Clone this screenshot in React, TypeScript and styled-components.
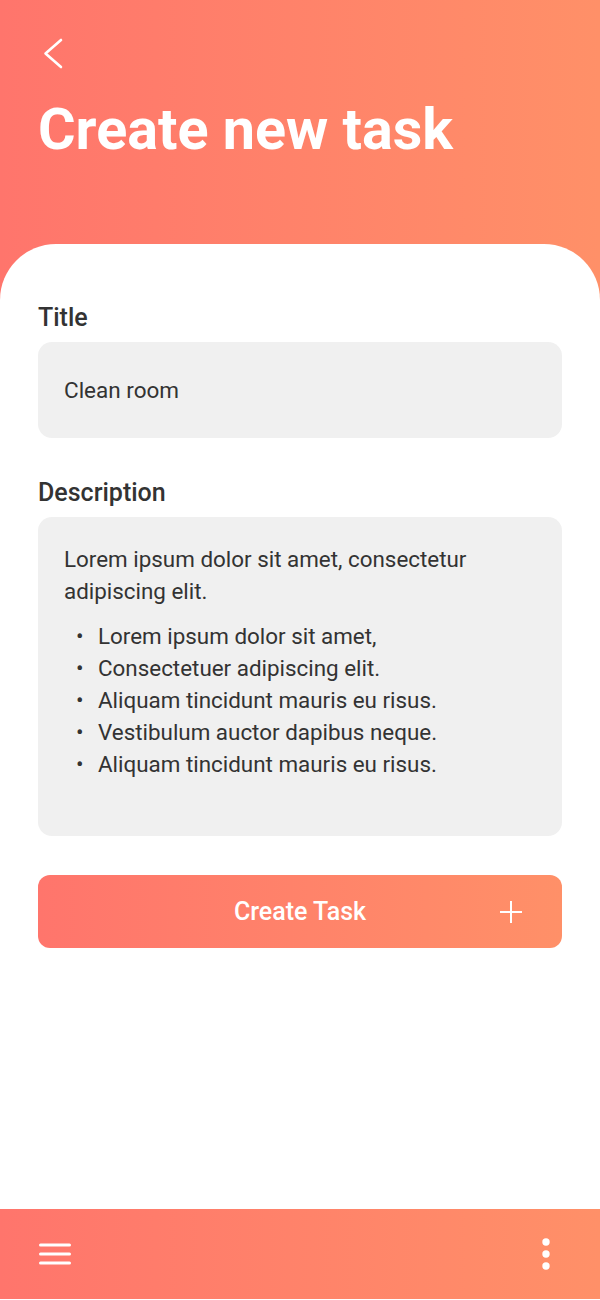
import React from "react";
import styled, { createGlobalStyle } from "styled-components";

const GlobalStyle = createGlobalStyle`
  html, body {
    margin: 0;
    padding: 0;
    background: #ffffff;
  }
  body {
    font-family: Roboto, "Noto Sans", "Liberation Sans", sans-serif;
    -webkit-font-smoothing: antialiased;
  }
  * { box-sizing: border-box; }
`;

const brandGradient = "linear-gradient(90deg, #ff756c 0%, #ff9068 100%)";

const Page = styled.div`
  width: 600px;
  height: 1299px;
  display: flex;
  flex-direction: column;
  background: ${brandGradient};
`;

const Header = styled.header`
  height: 244px;
  flex-shrink: 0;
  padding: 36px 38px 0 38px;
  display: flex;
  flex-direction: column;
  align-items: flex-start;
`;

const BackButton = styled.button`
  width: 30px;
  height: 34px;
  padding: 0;
  border: none;
  background: transparent;
  display: flex;
  cursor: pointer;
`;

const Title = styled.h1`
  margin: 31px 0 0 0;
  font-size: 57.5px;
  line-height: 58px;
  font-weight: 700;
  color: #ffffff;
  letter-spacing: 0;
`;

const Card = styled.main`
  flex: 1;
  background: #ffffff;
  border-radius: 56px 56px 0 0;
  padding: 60px 38px 0 38px;
  display: flex;
  flex-direction: column;
`;

const Label = styled.label<{ $gap?: number }>`
  display: block;
  margin-top: ${(p) => p.$gap ?? 0}px;
  font-size: 25px;
  line-height: 28px;
  font-weight: 500;
  color: #333333;
`;

const Field = styled.div`
  margin-top: 10px;
  height: 96px;
  border-radius: 14px;
  background: #f0f0f0;
  padding: 0 26px;
  display: flex;
  align-items: center;
  font-size: 22.5px;
  color: #333333;
`;

const DescriptionBox = styled.div`
  margin-top: 10px;
  height: 319px;
  border-radius: 14px;
  background: #f0f0f0;
  padding: 26px 26px 0 26px;
  font-size: 22.4px;
  line-height: 32px;
  color: #333333;
`;

const Paragraph = styled.p`
  margin: 0;
`;

const List = styled.ul`
  margin: 13px 0 0 0;
  padding: 0;
  list-style: none;
`;

const Item = styled.li`
  display: flex;
`;

const Bullet = styled.span`
  width: 34px;
  padding-left: 12px;
  flex-shrink: 0;
`;

const CreateButton = styled.button`
  margin-top: 39px;
  height: 73px;
  width: 100%;
  border: none;
  border-radius: 12px;
  background: ${brandGradient};
  color: #ffffff;
  font-family: inherit;
  font-size: 25px;
  font-weight: 500;
  display: grid;
  grid-template-columns: 1fr auto 1fr;
  align-items: center;
  padding: 0 39px;
  cursor: pointer;
`;

const ButtonLabel = styled.span`
  grid-column: 2;
`;

const ButtonIcon = styled.span`
  grid-column: 3;
  justify-self: end;
  display: flex;
`;

const BottomBar = styled.nav`
  height: 90px;
  flex-shrink: 0;
  background: ${brandGradient};
  display: flex;
  align-items: center;
  justify-content: space-between;
  padding: 0 46px 0 38px;
`;

const IconButton = styled.button`
  border: none;
  background: transparent;
  padding: 0;
  display: flex;
  cursor: pointer;
`;

const bullets = [
  "Lorem ipsum dolor sit amet,",
  "Consectetuer adipiscing elit.",
  "Aliquam tincidunt mauris eu risus.",
  "Vestibulum auctor dapibus neque.",
  "Aliquam tincidunt mauris eu risus.",
];

export default function App() {
  return (
    <>
      <GlobalStyle />
      <Page>
        <Header>
          <BackButton aria-label="Back">
            <svg width="30" height="34" viewBox="0 0 30 34" fill="none">
              <polyline
                points="23,4 7.5,17.5 23,31"
                stroke="#ffffff"
                strokeWidth="2.6"
                strokeLinecap="round"
                strokeLinejoin="round"
              />
            </svg>
          </BackButton>
          <Title>Create new task</Title>
        </Header>
        <Card>
          <Label>Title</Label>
          <Field>Clean room</Field>
          <Label $gap={41}>Description</Label>
          <DescriptionBox>
            <Paragraph>Lorem ipsum dolor sit amet, consectetur adipiscing elit.</Paragraph>
            <List>
              {bullets.map((b, i) => (
                <Item key={i}>
                  <Bullet>•</Bullet>
                  <span>{b}</span>
                </Item>
              ))}
            </List>
          </DescriptionBox>
          <CreateButton>
            <ButtonLabel>Create Task</ButtonLabel>
            <ButtonIcon>
              <svg width="24" height="24" viewBox="0 0 24 24" fill="none">
                <path d="M12 1v22M1 12h22" stroke="#ffffff" strokeWidth="2" />
              </svg>
            </ButtonIcon>
          </CreateButton>
        </Card>
        <BottomBar>
          <IconButton aria-label="Menu">
            <svg width="34" height="24" viewBox="0 0 34 24" fill="none">
              <path
                d="M2.5 3h29M2.5 12h29M2.5 21h29"
                stroke="#ffffff"
                strokeWidth="3"
                strokeLinecap="round"
              />
            </svg>
          </IconButton>
          <IconButton aria-label="More">
            <svg width="16" height="34" viewBox="0 0 16 34" fill="#ffffff">
              <circle cx="8" cy="5" r="3.7" />
              <circle cx="8" cy="17" r="3.7" />
              <circle cx="8" cy="29" r="3.7" />
            </svg>
          </IconButton>
        </BottomBar>
      </Page>
    </>
  );
}
